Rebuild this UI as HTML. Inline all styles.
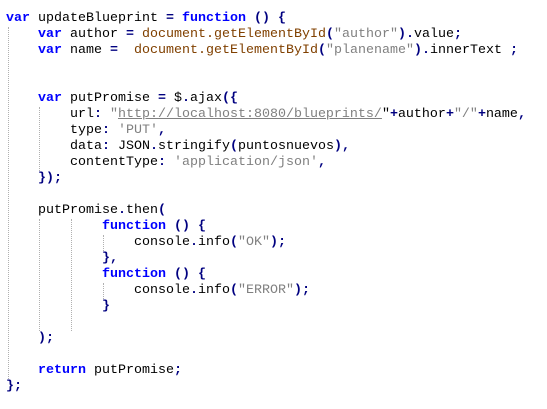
<!DOCTYPE html>
<html><head><meta charset="utf-8"><style>
html,body{margin:0;padding:0;background:#fff;width:547px;height:409px;overflow:hidden;position:relative}
pre{position:absolute;left:6px;top:11px;margin:0;font-family:"Liberation Mono","Courier New",monospace;font-size:13.33px;line-height:16px;color:#000}
.k{color:#0000ff;font-weight:bold}
.o{color:#000080;font-weight:bold}
.s{color:#808080}
.u{color:#808080;text-decoration:underline}
.d{color:#804000}
.g{position:absolute;width:0;border-left:1px dotted #b0b0b0}
</style></head><body>
<div class="g" style="left:8px;top:27px;height:352px"></div>
<div class="g" style="left:39px;top:107px;height:64px"></div>
<div class="g" style="left:39px;top:219px;height:112px"></div>
<div class="g" style="left:71px;top:219px;height:112px"></div>
<div class="g" style="left:103px;top:235px;height:16px"></div>
<div class="g" style="left:103px;top:283px;height:16px"></div>
<pre><span class="k">var</span> updateBlueprint <span class="o">=</span> <span class="k">function</span> <span class="o">()</span> <span class="o">{</span>
    <span class="k">var</span> author <span class="o">=</span> <span class="d">document.getElementById</span><span class="o">(</span><span class="s">"author"</span><span class="o">).</span>value<span class="o">;</span>
    <span class="k">var</span> name <span class="o">=</span>  <span class="d">document.getElementById</span><span class="o">(</span><span class="s">"planename"</span><span class="o">).</span>innerText <span class="o">;</span>


    <span class="k">var</span> putPromise <span class="o">=</span> $<span class="o">.</span>ajax<span class="o">({</span>
        url<span class="o">:</span> <span class="s">"</span><span class="u">http://localhost:8080/blueprints/</span>"<span class="o">+</span>author<span class="o">+</span><span class="s">"/"</span><span class="o">+</span>name<span class="o">,</span>
        type<span class="o">:</span> <span class="s">'PUT'</span><span class="o">,</span>
        data<span class="o">:</span> JSON<span class="o">.</span>stringify<span class="o">(</span>puntosnuevos<span class="o">),</span>
        contentType<span class="o">:</span> <span class="s">'application/json'</span><span class="o">,</span>
    <span class="o">});</span>

    putPromise<span class="o">.</span>then<span class="o">(</span>
            <span class="k">function</span> <span class="o">()</span> <span class="o">{</span>
                console<span class="o">.</span>info<span class="o">(</span><span class="s">"OK"</span><span class="o">);</span>
            <span class="o">},</span>
            <span class="k">function</span> <span class="o">()</span> <span class="o">{</span>
                console<span class="o">.</span>info<span class="o">(</span><span class="s">"ERROR"</span><span class="o">);</span>
            <span class="o">}</span>

    <span class="o">);</span>

    <span class="k">return</span> putPromise<span class="o">;</span>
<span class="o">};</span></pre>
</body></html>
